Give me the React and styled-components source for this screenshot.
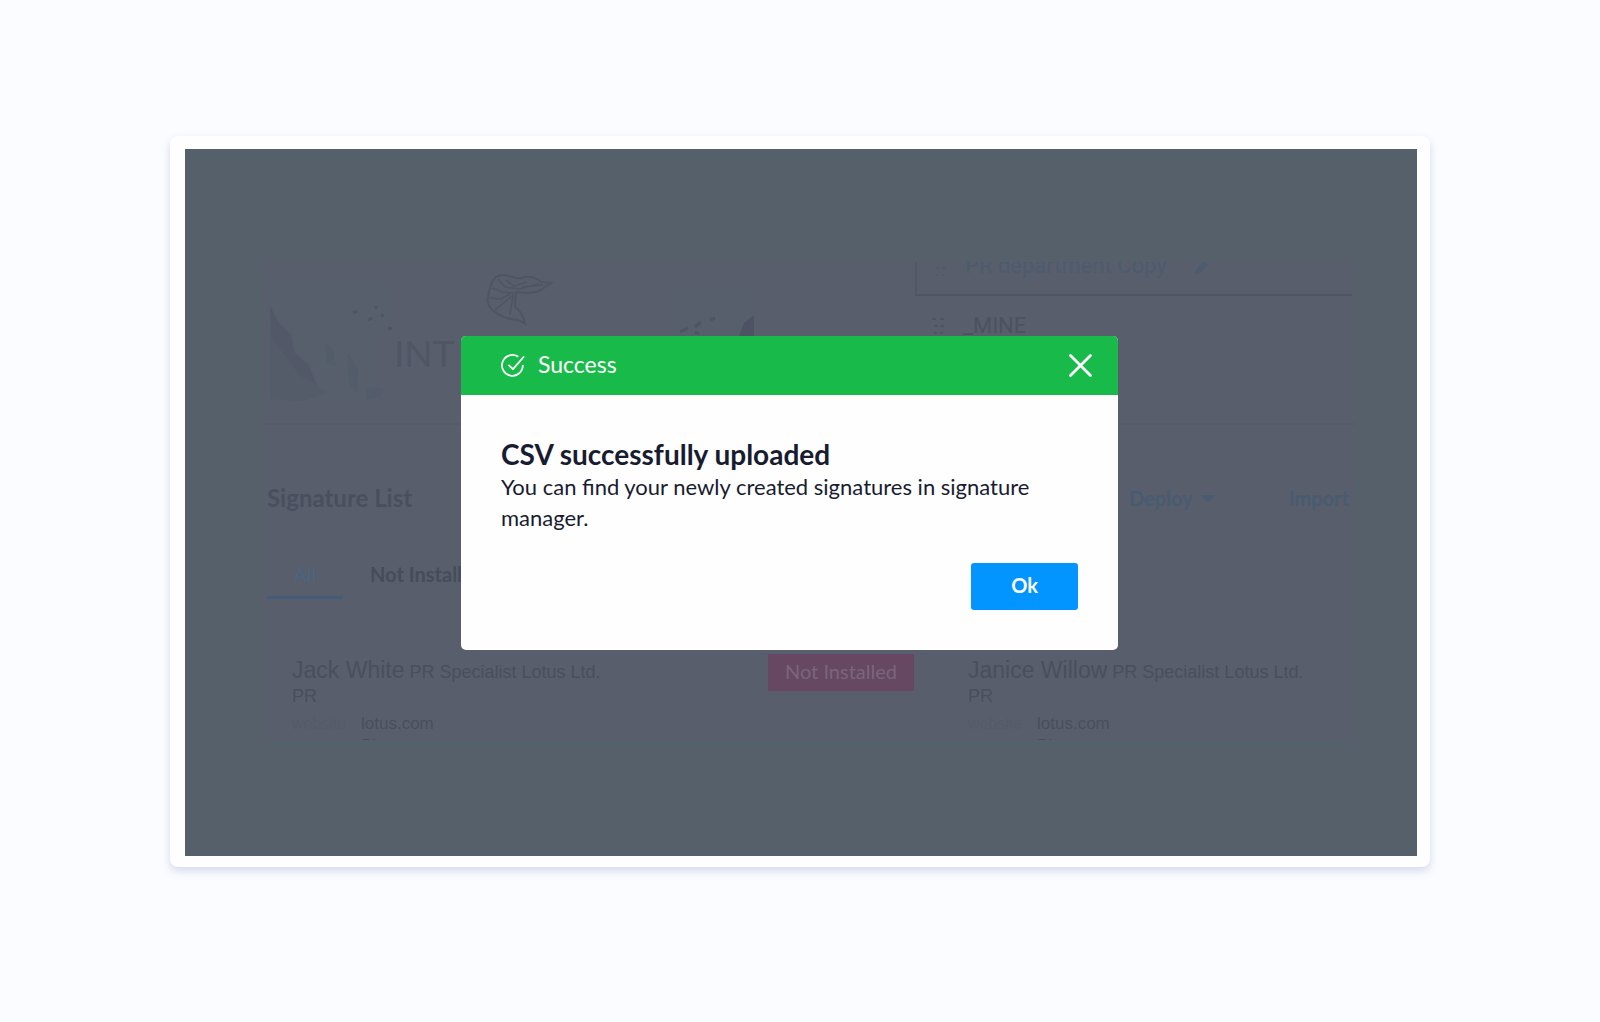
import React from "react";
import styled, { createGlobalStyle } from "styled-components";

const sans = `Lato, "Open Sans", "Liberation Sans", sans-serif`;
const arial = `"Liberation Sans", Arial, sans-serif`;

const GlobalStyle = createGlobalStyle`
  * { box-sizing: border-box; }
  body { margin: 0; background: #fbfcff; font-family: ${sans}; }
  button { font-family: inherit; border: 0; background: none; padding: 0; cursor: pointer; }
  h1, h2, p { margin: 0; }
`;

const Page = styled.main`
  min-height: 100vh;
  padding: 136px 170px 155px;
`;

const Frame = styled.div`
  padding: 13px 13px 11px 15px;
  background: #fefefe;
  border-radius: 8px;
  box-shadow: 0 4px 8px rgba(120, 130, 190, 0.28);
`;

const Screen = styled.div`
  position: relative;
  padding: 113px 62px 116px 77px;
  background: #56606b;
`;

const Manager = styled.div`
  height: 478px;
  overflow: hidden;
  background: #585e6c;
`;

const Top = styled.div`
  display: grid;
  grid-template-columns: 1fr 440px;
  height: 163px;
  border-bottom: 2px solid #575b69;
`;

const Banner = styled.div`
  display: grid;
  width: 486px;
  margin: 8px;
  > * { grid-area: 1 / 1; }
`;

const BannerArt = styled.svg`
  width: 486px;
  height: 136px;
`;

const BannerTitle = styled.span`
  align-self: center;
  padding: 20px 0 0 124px;
  color: #505665;
  font: 37px/40px ${sans};
`;

const Departments = styled.div`
  padding-right: 3px;
`;

const Department = styled.div`
  display: flex;
  align-items: ${(p) => (p.$selected ? "flex-end" : "center")};
  gap: 16px;
  height: ${(p) => (p.$selected ? "34px" : "60px")};
  padding: ${(p) => (p.$selected ? "0 0 16px 16px" : "0 0 0 16px")};
  overflow: hidden;
  color: ${(p) => (p.$selected ? "#4d5b6e" : "#4c5261")};
  border-left: ${(p) => (p.$selected ? "2px solid #525867" : "0")};
  border-bottom: ${(p) => (p.$selected ? "2px solid #505564" : "0")};
  font: 22px/24px Roboto, sans-serif;
`;

const Toolbar = styled.div`
  display: flex;
  align-items: center;
  height: 40px;
  margin: 53px 6px 0 5px;
`;

const ListTitle = styled.h2`
  flex: 1;
  color: #485060;
  font: 700 24px/30px ${sans};
`;

const ToolButton = styled.button`
  display: flex;
  align-items: center;
  gap: 8px;
  margin-left: 74px;
  color: #495b70;
  font-size: 20px;
  font-weight: 700;
`;

const Tabs = styled.div`
  display: flex;
  gap: 27px;
  margin: 37px 0 0 5px;
`;

const Tab = styled.button`
  width: ${(p) => (p.$active ? "76px" : "auto")};
  height: 44px;
  padding-bottom: 3px;
  border-bottom: 3px solid ${(p) => (p.$active ? "#465b79" : "transparent")};
  color: ${(p) => (p.$active ? "#4a6580" : "#454c5a")};
  font-size: 20px;
  font-weight: ${(p) => (p.$active ? 400 : 700)};
`;

const Cards = styled.div`
  display: grid;
  grid-template-columns: 652fr 387fr;
  gap: 24px;
  padding: 55px 0 0 30px;
`;

const Card = styled.article`
  display: flex;
  justify-content: space-between;
  align-items: flex-start;
  padding-right: 30px;
  color: #494f5e;
  font: 18px/24px ${arial};
`;

const Details = styled.div`
  padding-top: 6px;
`;

const Person = styled.span`
  font-size: 23px;
  line-height: 20px;
`;

const Contacts = styled.div`
  display: grid;
  grid-template-columns: 69px 1fr;
  padding-top: 5px;
  font-size: 17px;
  line-height: 22px;
`;

const Label = styled.span`
  color: #555b68;
  font-size: 16px;
`;

const Badge = styled.span`
  padding: 0 17px 2px;
  background: #664862;
  color: #7a667b;
  font: 20px/35px ${sans};
`;

const Backdrop = styled.div`
  position: absolute;
  inset: 0;
  display: flex;
  align-items: center;
  justify-content: center;
  padding: 0 23px 19px 0;
`;

const Dialog = styled.section`
  width: 657px;
  overflow: hidden;
  border-radius: 5px;
  background: #fefefe;
  color: #181c30;
`;

const DialogHeader = styled.header`
  display: flex;
  align-items: center;
  gap: 13px;
  height: 59px;
  padding: 0 26px 0 40px;
  background: #18ba49;
  color: #fff;
`;

const Status = styled.span`
  flex: 1;
  padding-bottom: 3px;
  font-size: 23px;
  line-height: 32px;
`;

const Close = styled.button`
  display: flex;
  color: #fff;
`;

const DialogBody = styled.div`
  padding: 42px 40px 40px;
`;

const DialogTitle = styled.h1`
  font-size: 28px;
  line-height: 34px;
`;

const Message = styled.p`
  font-size: 22px;
  line-height: 31px;
`;

const Actions = styled.div`
  display: flex;
  justify-content: flex-end;
  padding-top: 30px;
`;

const Confirm = styled.button`
  width: 107px;
  height: 47px;
  padding-bottom: 3px;
  border-radius: 3px;
  background: #0295ff;
  color: #fff;
  font-size: 20px;
  font-weight: 700;
`;

function Illustration() {
  return (
    <BannerArt viewBox="0 0 486 136" fill="none" aria-hidden="true">
      <path d="M0 8h120v45l-20 25 10 52H0z" fill="#56606c" opacity=".5" />
      <path d="M400 20h86v60h-86z" fill="#56606c" opacity=".5" />
      <path d="M0 36l9 17 12 11 3 18 14 12 10 23 9 6-24 8-33-2V60z" fill="#4f5666" opacity=".4" />
      <path d="M0 36l9 17 12 11 3 18 14 12 8 20-16-8-16-22-12-16z" fill="#4f5666" opacity=".5" />
      <path d="M55 72l8 7 3 17-9-3zM78 83l10 16-1 25-8-10zM96 118l18 1-4 8-14 3z" fill="#50586a" opacity=".45" />
      <path d="M83 43l4-2M98 50l4-2M106 36v3M111 46l3-1M118 58l4 1" stroke="#4e5464" strokeWidth="3" />
      <g stroke="#4d5362" strokeWidth="1.5" opacity=".8">
        <path d="M226 7c10-6 16 3 25 1 8-3 15 0 20 4l10 1-10 7c-8 4-15 3-25 2l-1 15c6 4 9 11 10 17-9-7-15-3-23-8-9-4-16-11-14-18 1-8 3-17 8-21z" strokeWidth="2" />
        <path d="M228 9l7 8 14 2 20-5M222 18l10 4 12 1M219 28l12 1 9-5M225 40l10-8 9-8M240 44l3-18M236 10l8 6 13-4M252 17l21-2" />
      </g>
      <path d="M410 62l8-4M425 57l6-5M440 50l5-2M425 62l4 2" stroke="#4e5464" strokeWidth="3" />
      <path d="M484 45l-10 8-5 13h15z" fill="#4d5363" />
    </BannerArt>
  );
}

function DragHandle() {
  return (
    <svg width="16" height="20" viewBox="0 0 16 20" fill="none" stroke="currentColor" strokeWidth="2" aria-hidden="true">
      <path d="M1 3h4M9 3h4M3 10h4M9 10h4M3 17h3M9 17h3" opacity=".75" />
    </svg>
  );
}

function Signature({ name, badge }) {
  return (
    <Card>
      <Details>
        <p><Person>{name}</Person> PR Specialist Lotus Ltd.</p>
        <p>PR</p>
        <Contacts>
          <Label>website</Label><span>lotus.com</span>
          <Label /><span>Ph</span>
        </Contacts>
      </Details>
      {badge && <Badge>{badge}</Badge>}
    </Card>
  );
}

export default function App() {
  return (
    <Page>
      <GlobalStyle />
      <Frame>
        <Screen>
          <Manager>
            <Top>
              <Banner>
                <Illustration />
                <BannerTitle>INT</BannerTitle>
              </Banner>
              <Departments>
                <Department $selected>
                  <DragHandle />
                  <span>PR department Copy</span>
                  <svg width="28" height="18" viewBox="0 0 28 18" aria-hidden="true">
                    <path d="M12 14l1-5 8-8 4 4-8 8z" fill="currentColor" />
                  </svg>
                </Department>
                <Department><DragHandle /><span>_MINE</span></Department>
              </Departments>
            </Top>
            <Toolbar>
              <ListTitle>Signature List</ListTitle>
              <ToolButton>
                Deploy
                <svg width="14" height="8" viewBox="0 0 14 8" aria-hidden="true">
                  <path d="M0 1h14L7 8z" fill="currentColor" />
                </svg>
              </ToolButton>
              <ToolButton>Import</ToolButton>
            </Toolbar>
            <Tabs>
              <Tab $active>All</Tab>
              <Tab>Not Installed</Tab>
            </Tabs>
            <Cards>
              <Signature name="Jack White" badge="Not Installed" />
              <Signature name="Janice Willow" />
            </Cards>
          </Manager>
          <Backdrop>
            <Dialog role="dialog" aria-modal="true" aria-labelledby="dialog-title">
              <DialogHeader>
                <svg width="24" height="24" viewBox="0 0 24 24" fill="none" stroke="currentColor" strokeWidth="1.8" strokeLinecap="round" strokeLinejoin="round" aria-hidden="true">
                  <path d="M16.6 2.4A10.4 10.4 0 1 0 21.8 11.6" />
                  <path d="M8 11.4l4 3.8L22.6 3" />
                </svg>
                <Status>Success</Status>
                <Close aria-label="Close">
                  <svg width="23" height="23" viewBox="0 0 23 23" fill="none" stroke="currentColor" strokeWidth="2.8" strokeLinecap="round" aria-hidden="true">
                    <path d="M1.5 1.5l20 20M21.5 1.5l-20 20" />
                  </svg>
                </Close>
              </DialogHeader>
              <DialogBody>
                <DialogTitle id="dialog-title">CSV successfully uploaded</DialogTitle>
                <Message>You can find your newly created signatures in signature manager.</Message>
                <Actions><Confirm>Ok</Confirm></Actions>
              </DialogBody>
            </Dialog>
          </Backdrop>
        </Screen>
      </Frame>
    </Page>
  );
}
